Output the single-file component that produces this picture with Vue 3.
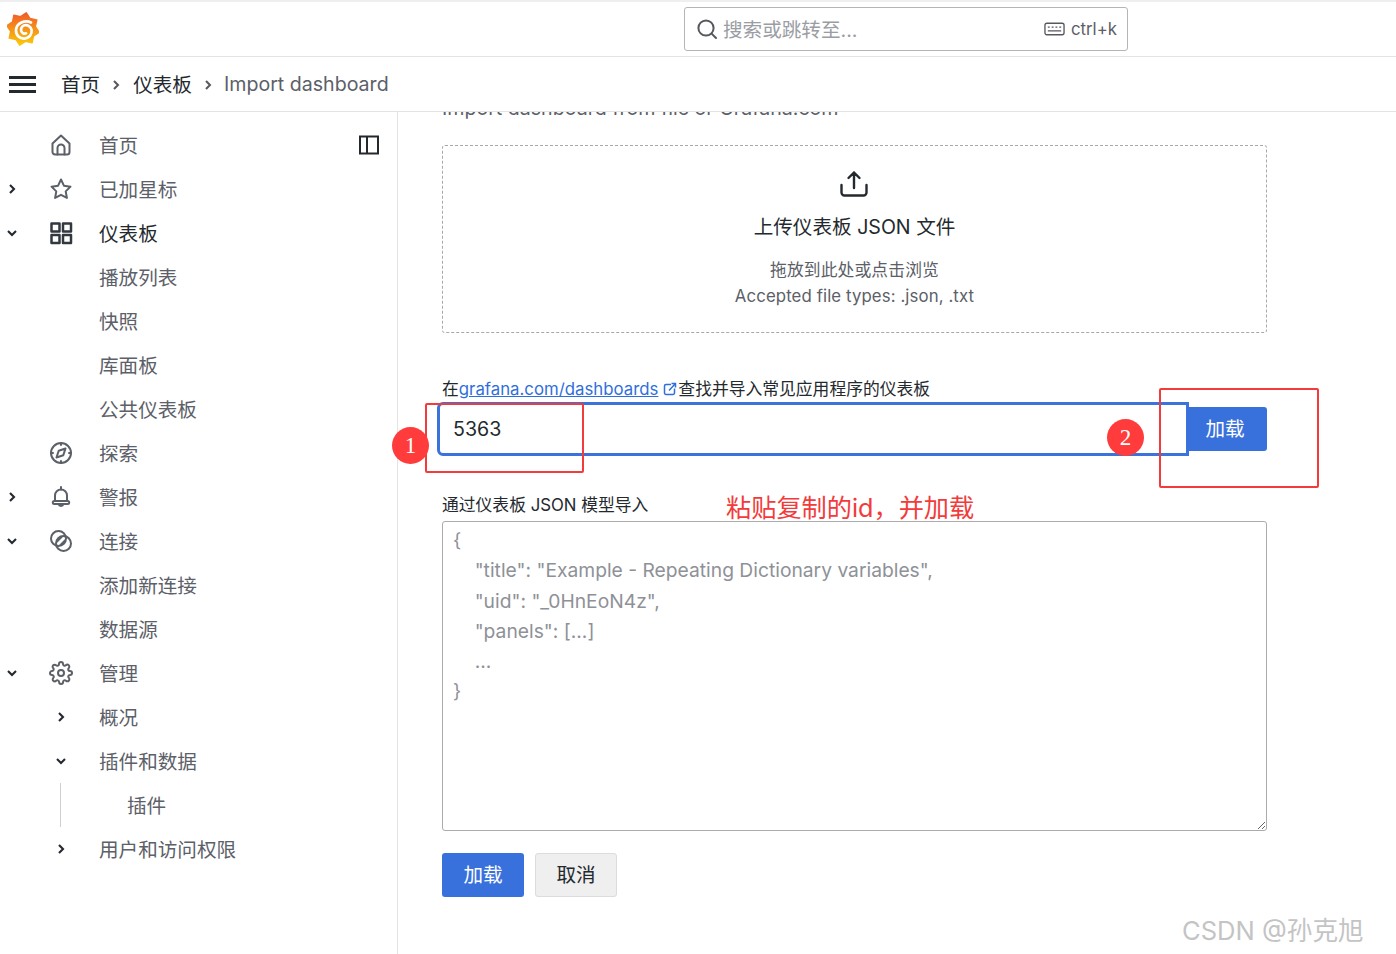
<template>
  <div class="page">
    <!-- 顶部栏 -->
    <header class="topbar">
      <svg class="logo" viewBox="0 0 32 34" width="32" height="34">
        <defs>
          <linearGradient id="logoGrad" x1="0" y1="0" x2="0" y2="1">
            <stop offset="0" stop-color="#f05a28" />
            <stop offset="1" stop-color="#fbca0a" />
          </linearGradient>
        </defs>
        <polygon :points="gearPoints" fill="url(#logoGrad)" stroke="url(#logoGrad)" stroke-width="1.5" stroke-linejoin="round" />
        <path d="M24 10.500C18 7.500 9.500 11 9 18C8.700 23.500 13 27 17.500 26.600C22 26.200 25.300 22.500 24.600 18C24 14.500 20.500 12.600 17.500 13.300C15 14 13.500 16.500 14.200 19C14.800 21 17 22.200 19 21.300" fill="none" stroke="#fff" stroke-width="2.700" stroke-linecap="round" />
      </svg>
      <div class="search">
        <svg class="search-icon" viewBox="0 0 24 24" width="24" height="24">
          <circle cx="11" cy="11" r="7.600" />
          <path d="M16.600 16.600L21 21" />
        </svg>
        <span class="search-text">搜索或跳转至...</span>
        <svg class="kbd-icon" viewBox="0 0 22 14" width="21" height="14">
          <rect x="1" y="1" width="20" height="12" rx="2" />
          <path d="M4 5h2M8 5h2M12 5h2M16 5h2M4 9h14" />
        </svg>
        <span class="kbd-text">ctrl+k</span>
      </div>
    </header>

    <!-- 面包屑 -->
    <div class="crumbs">
      <div class="burger"><i></i><i></i><i></i></div>
      <span class="crumb-link">首页</span>
      <svg class="crumb-sep" viewBox="0 0 10 12" width="10" height="12"><path d="M3 2l4 4-4 4" /></svg>
      <span class="crumb-link">仪表板</span>
      <svg class="crumb-sep" viewBox="0 0 10 12" width="10" height="12"><path d="M3 2l4 4-4 4" /></svg>
      <span class="crumb-now">Import dashboard</span>
    </div>

    <div class="body">
      <!-- 侧边栏 -->
      <aside class="side">
        <svg class="dock" viewBox="0 0 20 20" width="20" height="20">
          <rect x="1" y="1.500" width="18" height="17" />
          <path d="M8 1.500v17" />
        </svg>
        <div v-for="item in navItems" :key="item.label" class="nav-row" :class="{ active: item.active }">
          <svg v-if="item.arrow" class="arrow" :class="[item.arrow, item.level ? 'arrow-sub' : '']" viewBox="0 0 12 12" width="12" height="12">
            <path d="M4 2l4 4-4 4" />
          </svg>
          <svg v-if="item.icon" class="nav-icon" viewBox="0 0 24 24" width="24" height="24">
            <path v-for="d in icons[item.icon]" :key="d" :d="d" />
          </svg>
          <span v-if="item.line" class="tree-line"></span>
          <span class="nav-label" :class="{ deep: item.line }">{{ item.label }}</span>
        </div>
      </aside>

      <!-- 主内容 -->
      <main class="main">
        <p class="clipped">Import dashboard from file or Grafana.com</p>

        <div class="drop">
          <svg class="upload" viewBox="0 0 30 30" width="30" height="30">
            <path d="M15 19V3.500M9.500 9L15 3.500L20.500 9M2.500 16v7.500a3 3 0 0 0 3 3h19a3 3 0 0 0 3-3V16" />
          </svg>
          <div class="drop-title">上传仪表板 JSON 文件</div>
          <div class="drop-sub">拖放到此处或点击浏览</div>
          <div class="drop-sub second">Accepted file types: .json, .txt</div>
        </div>

        <div class="label first">
          在<a class="link">grafana.com/dashboards</a>
          <svg class="ext" viewBox="0 0 14 14" width="14" height="14">
            <path d="M8 2.500H3a1.500 1.500 0 0 0-1.500 1.500v7A1.500 1.500 0 0 0 3 12.500h7a1.500 1.500 0 0 0 1.500-1.500V6.500M6 8.500L12.500 1.500M8.500 1.500h4v4" />
          </svg>查找并导入常见应用程序的仪表板
        </div>

        <div class="id-row">
          <div class="id-input">5363</div>
          <button class="btn primary small">加载</button>
        </div>

        <div class="label second-label">通过仪表板 JSON 模型导入</div>
        <div class="json-box">{{ jsonHint }}</div>

        <div class="actions">
          <button class="btn primary">加载</button>
          <button class="btn ghost">取消</button>
        </div>
      </main>
    </div>

    <!-- 截图上的红色标注 -->
    <div class="mark-box box-one"></div>
    <div class="mark-box box-two"></div>
    <div class="mark-dot dot-one">1</div>
    <div class="mark-dot dot-two">2</div>
    <div class="mark-note">粘贴复制的id，并加载</div>
    <div class="watermark">CSDN @孙克旭</div>
  </div>
</template>

<script setup>
const navItems = [
  { label: '首页', icon: 'home' },
  { label: '已加星标', icon: 'star', arrow: 'right' },
  { label: '仪表板', icon: 'grid', arrow: 'down', active: true },
  { label: '播放列表' },
  { label: '快照' },
  { label: '库面板' },
  { label: '公共仪表板' },
  { label: '探索', icon: 'compass' },
  { label: '警报', icon: 'bell', arrow: 'right' },
  { label: '连接', icon: 'link', arrow: 'down' },
  { label: '添加新连接' },
  { label: '数据源' },
  { label: '管理', icon: 'cog', arrow: 'down' },
  { label: '概况', arrow: 'right', level: 1 },
  { label: '插件和数据', arrow: 'down', level: 1 },
  { label: '插件', line: true },
  { label: '用户和访问权限', arrow: 'right', level: 1 }
]

const icons = {
  home: ['M3.500 10.500L12 2.500l8.500 8V19a2.500 2.500 0 0 1-2.500 2.500H6A2.500 2.500 0 0 1 3.500 19z', 'M8.500 21.500V15a3.500 3.500 0 0 1 7 0v6.500'],
  star: ['M12 2.500l2.900 6.200 6.600.950-4.800 4.700 1.200 6.600L12 17.800l-5.900 3.150 1.200-6.600-4.800-4.700 6.600-.950z'],
  grid: ['M2.500 2.500h8v8h-8z', 'M14 2.500h8v8h-8z', 'M2.500 14h8v8h-8z', 'M14 14h8v8h-8z'],
  compass: ['M12 2a10 10 0 1 0 0 20 10 10 0 0 0 0-20z', 'M12 2v2M12 20v2M2 12h2M20 12h2', 'M16.500 7.500l-2.200 6.800-6.800 2.200 2.200-6.800z'],
  bell: ['M12 4.500a6 6 0 0 0-6 6v5.500h12v-5.500a6 6 0 0 0-6-6z', 'M3.800 17.500a1.500 1.500 0 0 1 1.500-1.500h13.400a1.500 1.500 0 0 1 0 3H5.300a1.500 1.500 0 0 1-1.500-1.500z', 'M9.500 19a2.600 2.600 0 0 0 5 0', 'M12 2v2.500'],
  link: ['M9.500 2a7.500 7.500 0 1 0 0 15 7.500 7.500 0 0 0 0-15z', 'M14.500 7a7.500 7.500 0 1 0 0 15 7.500 7.500 0 0 0 0-15z', 'M8 12.500L12.500 8', 'M11.500 16L16 11.500'],
  cog: ['M12 15a3 3 0 1 0 0-6 3 3 0 0 0 0 6z', 'M19.400 15a1.650 1.650 0 0 0 .33 1.820l.06.06a2 2 0 0 1 0 2.830 2 2 0 0 1-2.830 0l-.06-.06a1.650 1.650 0 0 0-1.820-.33 1.650 1.650 0 0 0-1 1.510V21a2 2 0 0 1-2 2 2 2 0 0 1-2-2v-.09A1.650 1.650 0 0 0 9 19.400a1.650 1.650 0 0 0-1.820.33l-.06.06a2 2 0 0 1-2.830 0 2 2 0 0 1 0-2.830l.06-.06a1.650 1.650 0 0 0 .33-1.820 1.650 1.650 0 0 0-1.510-1H3a2 2 0 0 1-2-2 2 2 0 0 1 2-2h.09A1.650 1.650 0 0 0 4.600 9a1.650 1.650 0 0 0-.33-1.820l-.06-.06a2 2 0 0 1 0-2.830 2 2 0 0 1 2.830 0l.06.06a1.650 1.650 0 0 0 1.820.33H9a1.650 1.650 0 0 0 1-1.510V3a2 2 0 0 1 2-2 2 2 0 0 1 2 2v.09a1.650 1.650 0 0 0 1 1.510 1.650 1.650 0 0 0 1.820-.33l.06-.06a2 2 0 0 1 2.830 0 2 2 0 0 1 0 2.830l-.06.06a1.650 1.650 0 0 0-.33 1.820V9a1.650 1.650 0 0 0 1.510 1H21a2 2 0 0 1 2 2 2 2 0 0 1-2 2h-.09a1.650 1.650 0 0 0-1.510 1z']
}

const jsonHint = `{
    "title": "Example - Repeating Dictionary variables",
    "uid": "_0HnEoN4z",
    "panels": [...]
    ...
}`

// logo 外圈的齿轮，用极坐标算出来
const gearPoints = (() => {
  const teeth = 8
  const pts = []
  for (let i = 0; i < teeth * 2; i++) {
    const r = i % 2 === 0 ? 16.500 : 12.500
    const a = (Math.PI * i) / teeth - Math.PI / 2 + 0.2
    pts.push(`${(16 + r * Math.cos(a)).toFixed(1)},${(17 + r * Math.sin(a)).toFixed(1)}`)
  }
  return pts.join(' ')
})()
</script>

<style>
html, body {
  margin: 0;
  background: #fff;
}
</style>

<style scoped>
.page {
  position: relative;
  width: 1396px;
  height: 954px;
  overflow: hidden;
  background: #fff;
  color: #24292e;
  font-family: Inter, "Noto Sans CJK SC", sans-serif;
  font-size: 19.6px;
}

/* 顶部栏 */
.topbar {
  height: 54px;
  box-sizing: content-box;
  border-top: 2px solid #efefef;
  border-bottom: 1px solid #e4e4e4;
  display: flex;
  align-items: center;
}
.logo {
  margin-left: 7px;
  flex: none;
}
.search {
  margin-left: 645px;
  width: 444px;
  height: 44px;
  box-sizing: border-box;
  border: 1px solid #b5b5b5;
  border-radius: 3px;
  display: flex;
  align-items: center;
  padding: 0 10px 0 11px;
}
.search-icon {
  fill: none;
  stroke: #55585e;
  stroke-width: 2;
  stroke-linecap: round;
  flex: none;
  margin-left: -1px;
}
.search-text {
  margin-left: 4px;
  margin-bottom: 2px;
  color: #9a9da3;
  flex: 1;
}
.kbd-icon {
  fill: none;
  stroke: #55585e;
  stroke-width: 1.400;
  margin-right: 6px;
}
.kbd-text {
  font-size: 16.800px;
  color: #5c6068;
}

/* 面包屑 */
.crumbs {
  height: 54px;
  border-bottom: 1px solid #e4e4e4;
  display: flex;
  align-items: center;
  padding-left: 9px;
}
.burger {
  width: 27px;
  margin-right: 25px;
  display: flex;
  flex-direction: column;
  gap: 4px;
}
.burger i {
  display: block;
  height: 3px;
  background: #24292e;
}
.crumb-link {
  margin-bottom: 2px;
}
.crumb-sep {
  margin: 2px 11px 0;
  fill: none;
  stroke: #55585e;
  stroke-width: 2;
}
.crumb-sep + .crumb-link {
  margin-left: 1px;
}
.crumb-now {
  color: #5c6068;
}

.body {
  display: flex;
  height: 842px;
}

/* 侧边栏 */
.side {
  position: relative;
  width: 398px;
  flex: none;
  box-sizing: border-box;
  border-right: 1px solid #e4e4e4;
  padding-top: 11px;
  color: #5c6068;
}
.dock {
  position: absolute;
  left: 359px;
  top: 23px;
  fill: none;
  stroke: #24292e;
  stroke-width: 2;
}
.nav-row {
  position: relative;
  height: 44px;
  display: flex;
  align-items: center;
  padding-left: 99px;
}
.nav-row.active {
  color: #24292e;
}
.nav-label {
  margin-bottom: 2px;
}
.arrow {
  position: absolute;
  left: 6px;
  top: 16px;
  fill: none;
  stroke: #24292e;
  stroke-width: 2.100;
}
.arrow.down {
  transform: rotate(90deg);
}
.arrow-sub {
  left: 55px;
}
.nav-icon {
  position: absolute;
  left: 49px;
  top: 10px;
  fill: none;
  stroke: #5c6068;
  stroke-width: 2;
  stroke-linejoin: round;
  stroke-linecap: round;
}
.active .nav-icon {
  stroke: #333840;
  stroke-width: 2.500;
}
.tree-line {
  position: absolute;
  left: 60px;
  top: 0;
  bottom: 0;
  width: 1px;
  background: #cfcfcf;
}
.nav-label.deep {
  margin-left: 28px;
}

/* 主内容 */
.main {
  flex: 1;
  overflow: hidden;
  padding-left: 44px;
}
.clipped {
  margin: -16px 0 0;
  height: 24px;
  line-height: 24px;
  color: #5c6068;
}
.drop {
  margin-top: 25px;
  width: 825px;
  height: 188px;
  box-sizing: border-box;
  border: 1px dashed #a8a8a8;
  border-radius: 3px;
  display: flex;
  flex-direction: column;
  align-items: center;
  padding-top: 24px;
}
.upload {
  fill: none;
  stroke: #24292e;
  stroke-width: 2.400;
  stroke-linecap: round;
  stroke-linejoin: round;
  flex: none;
  margin: -1px 2px 0 0;
}
.drop-title {
  margin-top: 14px;
  font-size: 19.600px;
  line-height: 28px;
}
.drop-sub {
  margin-top: 16px;
  font-size: 16.800px;
  line-height: 26px;
  color: #5c6068;
  letter-spacing: 0.1px;
}
.drop-sub.second {
  margin-top: 0;
}
.label {
  font-size: 16.800px;
  line-height: 24px;
}
.label.first {
  margin-top: 44px;
  display: flex;
  align-items: center;
}
.link {
  color: #2f6fdc;
  text-decoration: underline;
}
.ext {
  margin: 0 1px 0 5px;
  fill: none;
  stroke: #2f6fdc;
  stroke-width: 1.500;
}
.id-row {
  margin-top: 1px;
  margin-left: -5px;
  display: flex;
  align-items: center;
}
.id-input {
  width: 752px;
  height: 54px;
  box-sizing: border-box;
  border: 3px solid #3b72dc;
  border-radius: 6px 0 0 6px;
  padding-left: 13px;
  line-height: 48px;
  color: #24292e;
}
.btn {
  height: 44px;
  width: 82px;
  border-radius: 3px;
  box-sizing: border-box;
  font: inherit;
  padding: 0 0 4px;
  cursor: pointer;
}
.btn.primary {
  background: #3871dc;
  color: #fff;
  border: none;
}
.btn.small {
  width: 80px;
  margin-left: -2px;
  padding-right: 4px;
  border-radius: 0 3px 3px 0;
  position: relative;
}
.btn.ghost {
  background: #efefef;
  color: #24292e;
  border: 1px solid #dcdcdc;
}
.label.second-label {
  margin-top: 37px;
}
.json-box {
  margin-top: 4px;
  width: 825px;
  height: 310px;
  box-sizing: border-box;
  border: 1px solid #ababab;
  border-radius: 3px;
  padding: 3px 10px;
  white-space: pre-wrap;
  font-size: 19.250px;
  line-height: 30.300px;
  color: #8e9197;
  overflow: hidden;
  resize: both;
}
.actions {
  margin-top: 22px;
  display: flex;
  gap: 11px;
}

/* 标注层 */
.mark-box {
  position: absolute;
  box-sizing: border-box;
  border: 2px solid #f33b3b;
  border-radius: 2px;
}
.box-one {
  left: 425px;
  top: 403px;
  width: 159px;
  height: 70px;
}
.box-two {
  left: 1159px;
  top: 388px;
  width: 160px;
  height: 100px;
}
.mark-dot {
  position: absolute;
  width: 37px;
  height: 37px;
  border-radius: 50%;
  background: #ff3b3b;
  color: #fff;
  text-align: center;
  line-height: 37px;
  font-size: 23px;
  font-family: "Liberation Serif", serif;
}
.dot-one {
  left: 392px;
  top: 427px;
}
.dot-two {
  left: 1107px;
  top: 419px;
}
.mark-note {
  position: absolute;
  left: 726px;
  top: 489px;
  font-size: 25.200px;
  line-height: 38px;
  color: #f33b3b;
}
.watermark {
  position: absolute;
  left: 1182px;
  top: 913px;
  font-size: 25.600px;
  line-height: 36px;
  color: #c4c4c4;
}
</style>
